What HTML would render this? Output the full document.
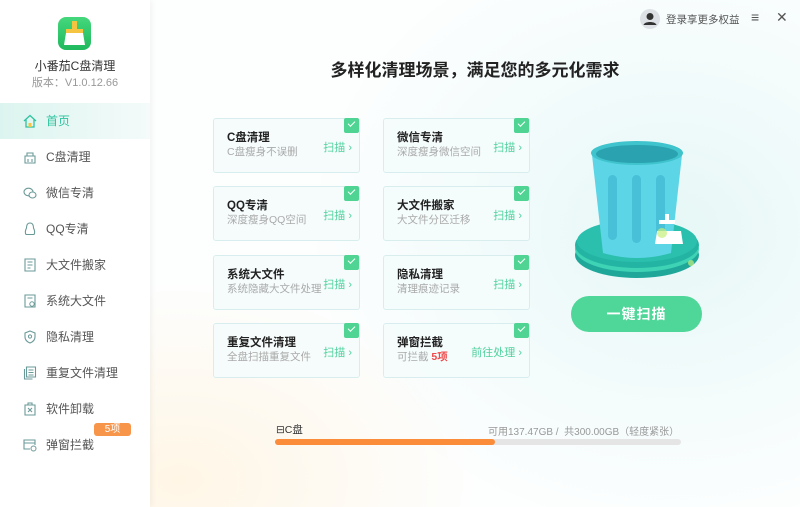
<!DOCTYPE html>
<html><head><meta charset="utf-8"><style>
*{margin:0;padding:0;box-sizing:border-box}
body{width:800px;height:507px;overflow:hidden;font-family:"Liberation Sans","Noto Sans CJK SC",sans-serif;position:relative;background:#fff}
.main{position:absolute;left:150px;top:0;width:650px;height:507px;background:radial-gradient(ellipse 300px 200px at 30px 480px,#fff6e6 0%,rgba(255,250,240,0) 100%),radial-gradient(ellipse 360px 300px at 520px 230px,#e6f7f6 0%,#f2fbfb 50%,rgba(255,255,255,0) 100%),#fdfefe}
.side{position:absolute;left:0;top:0;width:150px;height:507px;background:#fff;box-shadow:1px 0 6px rgba(0,0,0,.06)}
.logo{position:absolute;left:58px;top:17px;width:33px;height:33px;border-radius:8px;background:linear-gradient(#45d77c,#1fb95e)}
.t1{position:absolute;left:0;width:150px;text-align:center;top:57px;font-size:12px;color:#333}
.t2{position:absolute;left:0;width:150px;text-align:center;top:74px;font-size:11px;color:#999}
.nav{position:absolute;left:0;width:150px;height:36px;font-size:12px;color:#555;line-height:36px;padding-left:46px}
.nav.act{background:linear-gradient(90deg,#dcf4ef,#f4fbfa);color:#2fc3a0}
.ic{position:absolute;left:23px;top:11px;width:14px;height:14px}
.title{position:absolute;left:150px;width:650px;top:56px;text-align:center;font-size:17px;font-weight:bold;color:#222}
.card{position:absolute;width:147px;height:55px;border:1px solid #d8eeee;border-radius:3px;background:rgba(245,252,252,.85)}
.card b{position:absolute;left:13px;top:10px;font-size:11.5px;color:#222}
.card span{position:absolute;left:13px;top:25px;font-size:10.5px;color:#aaa;white-space:nowrap}
.card i{position:absolute;right:7px;top:20px;font-style:normal;font-size:11px;color:#4fd29d}
.chk{position:absolute;right:0;top:-1px;width:15px;height:15px;background:#4fd494;border-radius:2px}
.chk:after{content:"";position:absolute;left:4px;top:3px;width:6px;height:3px;border-left:1.2px solid #fff;border-bottom:1.2px solid #fff;transform:rotate(-45deg)}
.btn{position:absolute;left:571px;top:296px;width:131px;height:36px;border-radius:18px;background:#4fd699;color:#fff;font-size:14px;font-weight:bold;text-align:center;line-height:36px;letter-spacing:1px}
</style></head><body>
<div class="main"></div>
<div class="side">
<div class="logo"><svg width="33" height="33" viewBox="0 0 33 33"><rect x="14" y="4" width="5" height="10" fill="#f5c542"/><rect x="8" y="12" width="17" height="4" fill="#f5c542"/><path d="M8 16h17l2 12H6z" fill="#fff"/></svg></div>
<div class="t1">小番茄C盘清理</div>
<div class="t2">版本：V1.0.12.66</div>
<div class="nav act" style="top:103px"><svg class="ic" viewBox="0 0 14 14"><path d="M1 7L7 1.5 13 7M3 5.5V13h8V5.5" fill="none" stroke="#2fc3a0" stroke-width="1.3"/><rect x="5.5" y="9" width="3" height="4" fill="#f5c542"/></svg>首页</div>
<div class="nav" style="top:139px"><svg class="ic" viewBox="0 0 14 14"><path d="M2 6h10v7H2zM4 6V3h6v3M5 9v3M9 9v3" fill="none" stroke="#6a9a98" stroke-width="1.1"/></svg>C盘清理</div>
<div class="nav" style="top:175px"><svg class="ic" viewBox="0 0 14 14"><ellipse cx="5.5" cy="6" rx="4.5" ry="3.8" fill="none" stroke="#6a9a98" stroke-width="1.1"/><ellipse cx="9.5" cy="9" rx="3.5" ry="3" fill="#fff" stroke="#6a9a98" stroke-width="1.1"/></svg>微信专清</div>
<div class="nav" style="top:211px"><svg class="ic" viewBox="0 0 14 14"><path d="M7 1C4 1 3.5 4 3.5 6 2 9 2 11 3 12.5h8c1-1.5 1-3.5-.5-6.5C10.5 4 10 1 7 1z" fill="none" stroke="#6a9a98" stroke-width="1.1"/></svg>QQ专清</div>
<div class="nav" style="top:247px"><svg class="ic" viewBox="0 0 14 14"><path d="M2 1h10v12H2zM4.5 4h5M4.5 7h5M4.5 10h3" fill="none" stroke="#6a9a98" stroke-width="1.1"/></svg>大文件搬家</div>
<div class="nav" style="top:283px"><svg class="ic" viewBox="0 0 14 14"><path d="M2 1h10v12H2zM4.5 4h5" fill="none" stroke="#6a9a98" stroke-width="1.1"/><circle cx="9" cy="10" r="2.2" fill="none" stroke="#6a9a98"/></svg>系统大文件</div>
<div class="nav" style="top:319px"><svg class="ic" viewBox="0 0 14 14"><path d="M7 1l5 2v4c0 3-2.5 5-5 6-2.5-1-5-3-5-6V3z" fill="none" stroke="#6a9a98" stroke-width="1.1"/><circle cx="7" cy="6.5" r="1.6" fill="none" stroke="#6a9a98"/></svg>隐私清理</div>
<div class="nav" style="top:355px"><svg class="ic" viewBox="0 0 14 14"><path d="M1.5 3v10h8M3.5 1h9v10h-9zM5.5 4h5M5.5 6.5h5M5.5 9h5" fill="none" stroke="#6a9a98" stroke-width="1.1"/></svg>重复文件清理</div>
<div class="nav" style="top:391px"><svg class="ic" viewBox="0 0 14 14"><path d="M2 3h10v10H2zM5 3V1h4v2M5 6l4 4M9 6l-4 4" fill="none" stroke="#6a9a98" stroke-width="1.1"/></svg>软件卸载</div>
<div class="nav" style="top:427px"><svg class="ic" viewBox="0 0 14 14"><path d="M12 7V2H1v9h6M1 5h11" fill="none" stroke="#6a9a98" stroke-width="1.1"/><circle cx="10.5" cy="10.5" r="2.5" fill="none" stroke="#6a9a98"/></svg>弹窗拦截</div>
<div style="position:absolute;left:94px;top:423px;width:37px;height:13px;background:#f7964a;border-radius:3px;color:#fff;font-size:10px;text-align:center;line-height:13px">5项</div>
</div>
<svg style="position:absolute;left:640px;top:9px" width="20" height="20"><circle cx="10" cy="10" r="10" fill="#dde1e6"/><circle cx="10" cy="7.5" r="3.5" fill="#333"/><path d="M3.5 16c1-4 12-4 13 0" fill="#333"/></svg>
<div style="position:absolute;left:666px;top:12px;font-size:10.5px;color:#555">登录享更多权益</div>
<div style="position:absolute;left:751px;top:9px;font-size:14px;color:#555">≡</div>
<div style="position:absolute;left:776px;top:9px;font-size:14px;color:#555">✕</div>
<div class="title">多样化清理场景，满足您的多元化需求</div>
<div class="card" style="left:213px;top:118px"><b>C盘清理</b><span>C盘瘦身不误删</span><i>扫描 ›</i><div class="chk"></div></div>
<div class="card" style="left:383px;top:118px"><b>微信专清</b><span>深度瘦身微信空间</span><i>扫描 ›</i><div class="chk"></div></div>
<div class="card" style="left:213px;top:186px"><b>QQ专清</b><span>深度瘦身QQ空间</span><i>扫描 ›</i><div class="chk"></div></div>
<div class="card" style="left:383px;top:186px"><b>大文件搬家</b><span>大文件分区迁移</span><i>扫描 ›</i><div class="chk"></div></div>
<div class="card" style="left:213px;top:255px"><b>系统大文件</b><span>系统隐藏大文件处理</span><i>扫描 ›</i><div class="chk"></div></div>
<div class="card" style="left:383px;top:255px"><b>隐私清理</b><span>清理痕迹记录</span><i>扫描 ›</i><div class="chk"></div></div>
<div class="card" style="left:213px;top:323px"><b>重复文件清理</b><span>全盘扫描重复文件</span><i>扫描 ›</i><div class="chk"></div></div>
<div class="card" style="left:383px;top:323px"><b>弹窗拦截</b><span>可拦截 <em style="font-style:normal;color:#f04a4a;font-weight:bold">5项</em></span><i>前往处理 ›</i><div class="chk"></div></div>
<svg style="position:absolute;left:567px;top:135px" width="170" height="150" viewBox="0 0 170 150">
<ellipse cx="70" cy="120" rx="62" ry="23" fill="#1fa79a"/>
<ellipse cx="70" cy="114" rx="62" ry="23" fill="#3fd3b5"/>
<ellipse cx="70" cy="110" rx="62" ry="23" fill="#24b4a3"/>
<ellipse cx="70" cy="106" rx="60" ry="21" fill="#2bbfae"/>
<path d="M25 20 L36 118 Q70 128 104 118 L115 20z" fill="#5cd5e6"/>
<rect x="41" y="40" width="9" height="65" rx="4.5" fill="#47c0d8"/>
<rect x="65" y="40" width="9" height="68" rx="4.5" fill="#47c0d8"/>
<rect x="89" y="40" width="9" height="65" rx="4.5" fill="#47c0d8"/>
<ellipse cx="70" cy="18" rx="46" ry="12" fill="#3fc3cc"/>
<ellipse cx="70" cy="19" rx="41" ry="9" fill="#2aa2b0"/>
<path d="M92 85h6v-6h4v6h6v4H92zM90 96h24l2 13H88z" fill="#fff"/>
<circle cx="95" cy="98" r="5" fill="#c4f07a" opacity=".7"/><circle cx="124" cy="128" r="3" fill="#c4f07a" opacity=".7"/>
</svg>
<div class="btn">一键扫描</div>
<div style="position:absolute;left:276px;top:422px;font-size:10.5px;color:#333">⊟C盘</div>
<div style="position:absolute;left:488px;top:423px;font-size:10px;color:#999">可用137.47GB / &nbsp;共300.00GB（轻度紧张）</div>
<div style="position:absolute;left:275px;top:439px;width:406px;height:6px;border-radius:3px;background:#e5e5e5"><div style="width:220px;height:6px;border-radius:3px;background:#fb8c3a"></div></div>
</body></html>
